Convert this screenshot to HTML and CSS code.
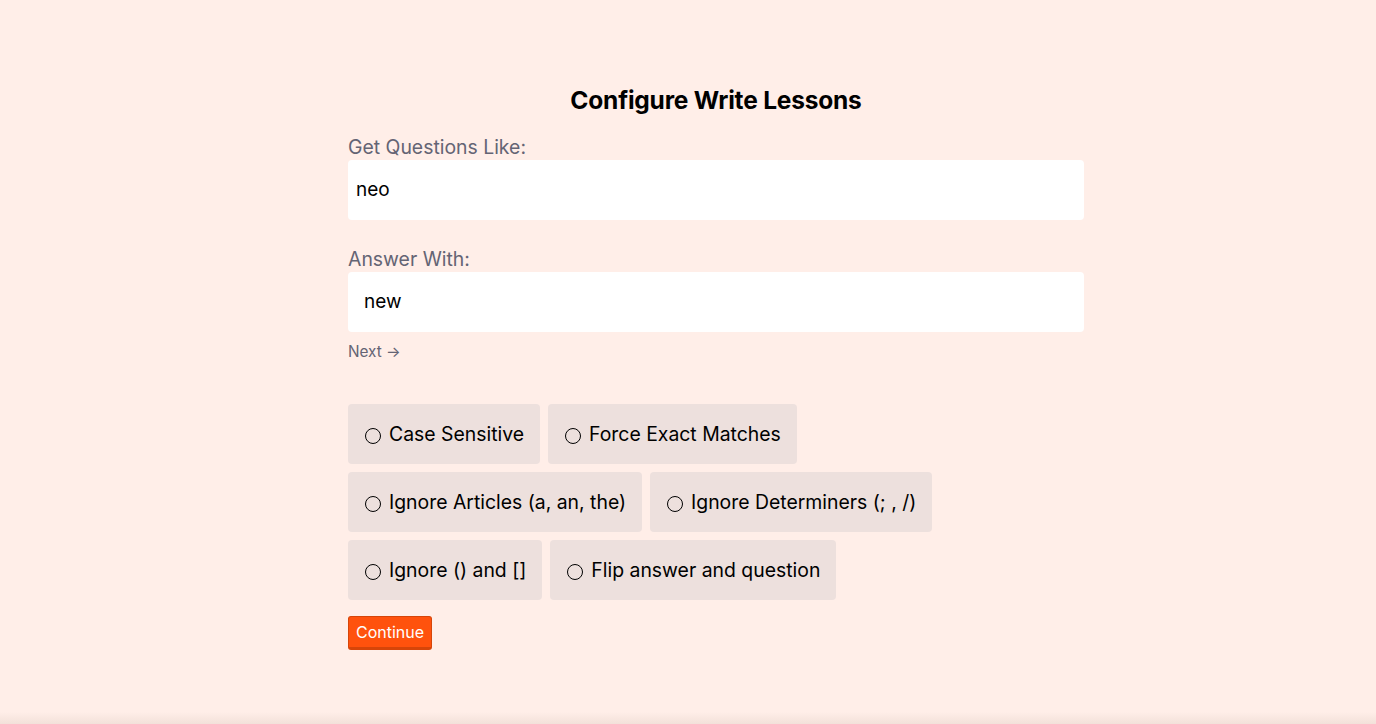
FILE: index.html
```html
<!DOCTYPE html>
<html>
<head>
<meta charset="utf-8">
<link rel="stylesheet" href="styles.css">
</head>
<body>
<main class="page">
  <section class="panel">
    <h1 class="title">Configure Write Lessons</h1>
    <label class="field-label">Get Questions Like:</label>
    <div class="input input-q">neo</div>
    <label class="field-label field-label-2">Answer With:</label>
    <div class="input input-a">new</div>
    <div class="next">Next →</div>
    <div class="options">
      <div class="row">
        <div class="opt"><span class="radio"></span>Case Sensitive</div>
        <div class="opt"><span class="radio"></span>Force Exact Matches</div>
      </div>
      <div class="row">
        <div class="opt"><span class="radio"></span>Ignore Articles (a, an, the)</div>
        <div class="opt"><span class="radio"></span>Ignore Determiners (; , /)</div>
      </div>
      <div class="row">
        <div class="opt"><span class="radio"></span>Ignore () and []</div>
        <div class="opt"><span class="radio"></span>Flip answer and question</div>
      </div>
    </div>
    <button class="continue">Continue</button>
  </section>
</main>
<div class="bottom-shade"></div>
</body>
</html>
```

FILE: styles.css
```css
html, body {
  margin: 0;
  padding: 0;
  height: 100%;
}
body {
  background: #ffeee8;
  font-family: Inter, "Noto Sans", sans-serif;
  color: #000;
  overflow: hidden;
  position: relative;
}
.page {
  display: flex;
  justify-content: center;
  padding-top: 86px;
  padding-left: 56px;
}
.panel {
  width: 736px;
  display: flex;
  flex-direction: column;
}
.title {
  margin: 0;
  text-align: center;
  font-size: 24.5px;
  font-weight: 700;
  line-height: 28px;
  letter-spacing: -0.2px;
}
.field-label {
  display: block;
  margin-top: 21px;
  color: #646474;
  font-size: 19.4px;
  line-height: 24px;
  height: 24px;
  margin-bottom: 0;
}
.field-label-2 {
  margin-top: 27px;
}
.input {
  background: #fff;
  border-radius: 4px;
  height: 60px;
  font-size: 19px;
  line-height: 60px;
  box-sizing: border-box;
  margin-top: 1px;
}
.input-q {
  padding-left: 8px;
}
.input-a {
  padding-left: 16px;
}
.next {
  margin-top: 10px;
  color: #646474;
  font-size: 15.3px;
  line-height: 20px;
}
.options {
  margin-top: 42px;
  display: flex;
  flex-direction: column;
  gap: 8px;
}
.row {
  display: flex;
  gap: 8px;
}
.opt {
  background: #ede0dd;
  border-radius: 4px;
  height: 60px;
  padding: 0 16px 0 17px;
  display: flex;
  align-items: center;
  font-size: 19.4px;
}
.radio {
  width: 14px;
  height: 14px;
  border: 1.8px solid #000;
  border-radius: 50%;
  margin-right: 8px;
  margin-top: 3px;
}
.continue {
  margin-top: 16px;
  align-self: flex-start;
  background: #ff520d;
  color: #fff;
  border: 1px solid #d64509;
  border-bottom: 3px solid #d64509;
  border-radius: 3px;
  height: 34px;
  padding: 0 7px;
  font-family: inherit;
  font-size: 16px;
  line-height: 29px;
}
.bottom-shade {
  position: absolute;
  left: 0;
  right: 0;
  bottom: 0;
  height: 12px;
  background: linear-gradient(to bottom, rgba(220,200,190,0), rgba(220,200,190,0.35));
}
```
